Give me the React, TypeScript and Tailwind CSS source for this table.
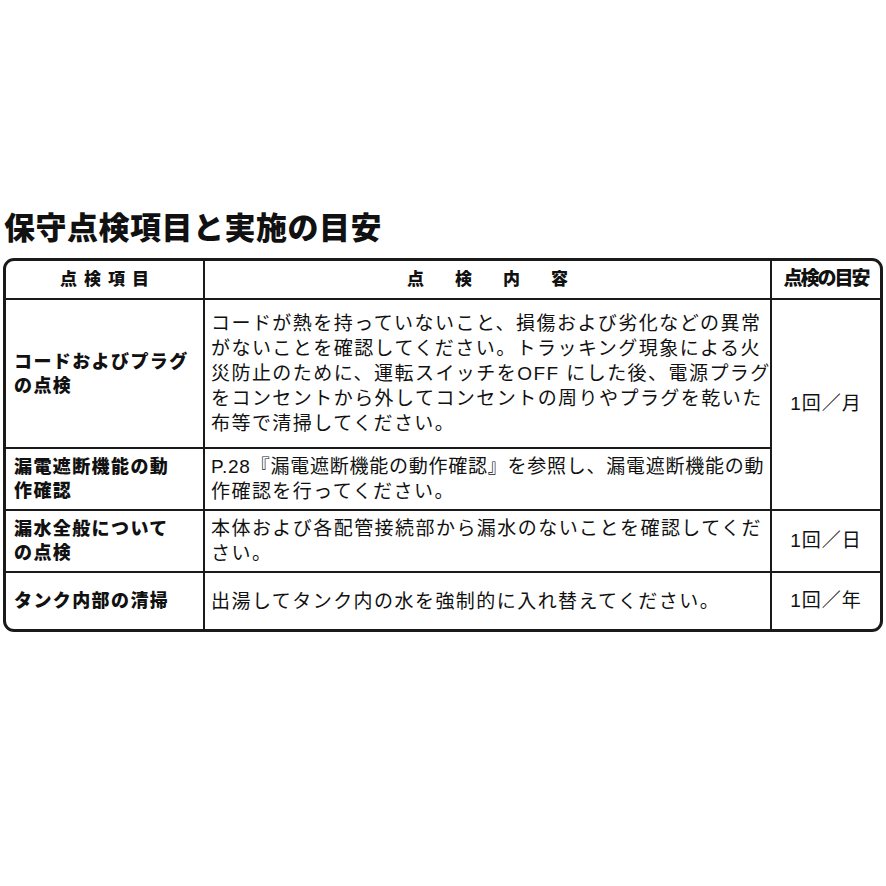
const font = { fontFamily: '"Liberation Sans", "Noto Sans CJK JP", sans-serif' };

const rows = [
  {
    item: ['コードおよびプラグ', 'の点検'],
    body: [
      'コードが熱を持っていないこと、損傷および劣化などの異常',
      'がないことを確認してください。トラッキング現象による火',
      '災防止のために、運転スイッチをOFF にした後、電源プラグ',
      'をコンセントから外してコンセントの周りやプラグを乾いた',
      '布等で清掃してください。',
    ],
    freq: '1回／月',
    span: 2,
    h: 'h-[149px]',
  },
  {
    item: ['漏電遮断機能の動', '作確認'],
    body: [],
    h: 'h-[62px]',
  },
  {
    item: ['漏水全般について', 'の点検'],
    body: ['本体および各配管接続部から漏水のないことを確認してくだ', 'さい。'],
    freq: '1回／日',
    span: 1,
    h: 'h-[62px]',
  },
  {
    item: ['タンク内部の清掃'],
    body: ['出湯してタンク内の水を強制的に入れ替えてください。'],
    freq: '1回／年',
    span: 1,
    h: 'h-[57px]',
  },
];

export default function App() {
  return (
    <div className="w-[886px] h-[886px] bg-white text-[#111]" style={font}>
      <div className="pt-[208px] pl-[3px]">
        <h1 className="text-[31px] leading-[42px] font-black tracking-[0.5px] ml-[1px]">保守点検項目と実施の目安</h1>
        <div className="mt-[8px] w-[880px] border-[3px] border-[#1a1a1a] rounded-[11px] overflow-hidden">
          <table className="w-full border-collapse border-hidden table-fixed">
            <colgroup>
              <col className="w-[198px]" />
              <col className="w-[567px]" />
              <col />
            </colgroup>
            <thead>
              <tr className="h-[38px]">
                <th className="border-2 border-[#1a1a1a] text-[17px] font-black tracking-[7px] pl-[7px]">点検項目</th>
                <th className="border-2 border-[#1a1a1a] text-[17px] font-black tracking-[31px] pl-[31px]">点検内容</th>
                <th className="border-2 border-[#1a1a1a] text-[19px] font-black tracking-[-2px] whitespace-nowrap">点検の目安</th>
              </tr>
            </thead>
            <tbody>
              {rows.map((r, i) => (
                <tr key={i} className={r.h}>
                  <td className="border-2 border-[#1a1a1a] pl-[8px] pr-1 text-[18px] leading-[24px] font-extrabold tracking-[1.4px] align-middle">
                    {r.item.map((t, j) => (
                      <div key={j}>{t}</div>
                    ))}
                  </td>
                  <td className="border-2 border-[#1a1a1a] pl-[6px] text-[19px] leading-[25px] tracking-[1.45px] align-middle whitespace-nowrap">
                    {i === 1 && (
                      <>
                        <div className="tracking-[0.75px]">P.28『漏電遮断機能の動作確認』を参照し、漏電遮断機能の動</div>
                        <div>作確認を行ってください。</div>
                      </>
                    )}
                    {r.body.map((t, j) => (
                      <div key={j}>{t}</div>
                    ))}
                  </td>
                  {r.freq && (
                    <td rowSpan={r.span} className="border-2 border-[#1a1a1a] text-center text-[19px] tracking-[1px] align-middle">
                      {r.freq}
                    </td>
                  )}
                </tr>
              ))}
            </tbody>
          </table>
        </div>
      </div>
    </div>
  );
}
